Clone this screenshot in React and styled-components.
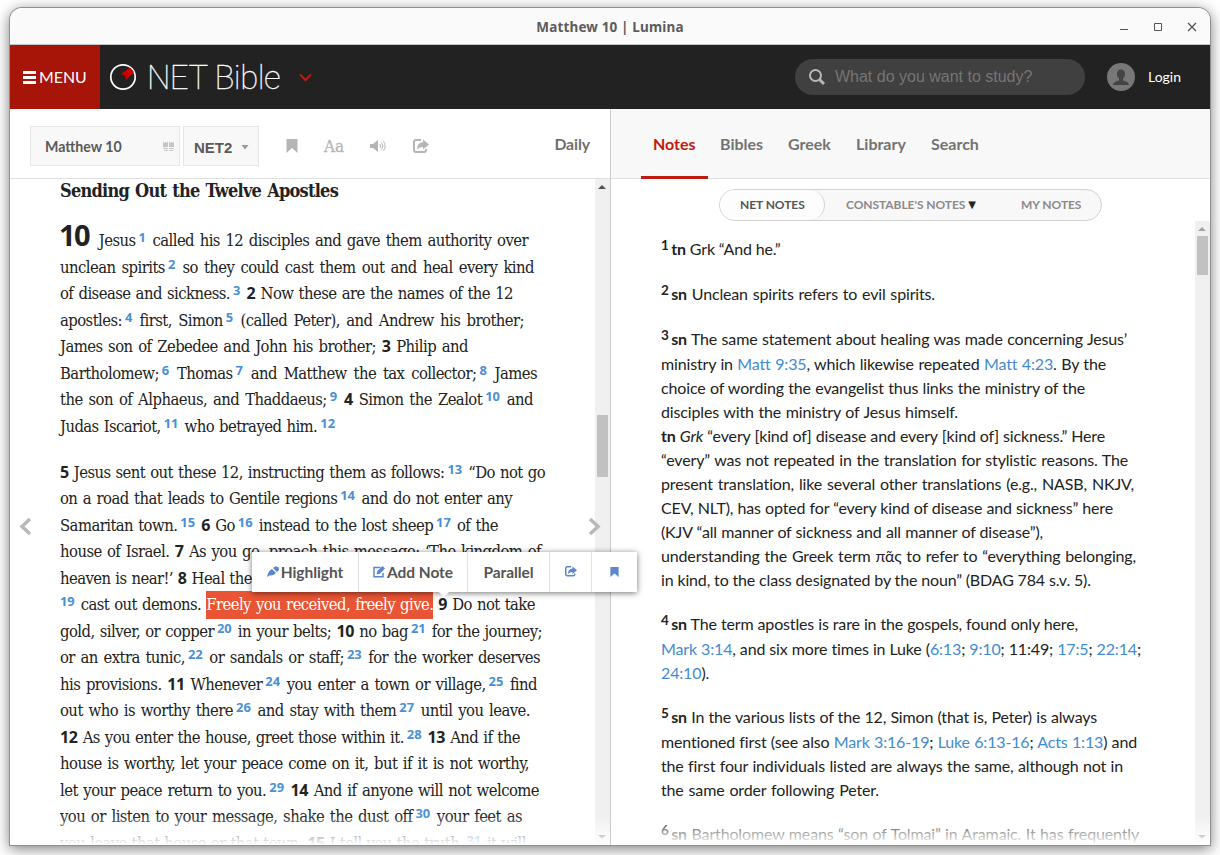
import React from "react";
import styled, { createGlobalStyle, css } from "styled-components";

const Global = createGlobalStyle`
  * { box-sizing: border-box; }
  body { margin: 0; background: #fff; overflow: hidden; }
  #root { width: 1220px; height: 855px; overflow: hidden; }
`;

const sans = `Lato, "Liberation Sans", sans-serif`;
const humanist = `"Open Sans", "Noto Sans", sans-serif`;
const slab = `"DejaVu Serif Condensed", "DejaVu Serif", serif`;

const Desktop = styled.div`
  width: 1220px;
  height: 855px;
  padding: 8px 10px 10px;
  overflow: hidden;
  font-family: ${sans};
  color: #222;
`;
const Window = styled.div`
  height: 837px;
  display: flex;
  flex-direction: column;
  background: #fff;
  border-radius: 12px 12px 0 0;
  box-shadow: 0 0 0 1px #8f8f8f, 0 3px 14px 1px rgba(0, 0, 0, 0.5);
`;
const TitleBar = styled.div`
  height: 37px;
  flex: none;
  display: grid;
  grid-template-columns: 1fr auto 1fr;
  align-items: center;
  background: #fafafa;
  border-bottom: 1px solid #c6c6c6;
  border-radius: 12px 12px 0 0;
`;
const Title = styled.div`
  grid-column: 2;
  font: 700 13.5px/38px "Noto Sans", sans-serif;
  letter-spacing: 0.15px;
  color: #5c5c5c;
`;
const WindowButtons = styled.div`
  display: flex;
  justify-content: flex-end;
  padding-right: 10px;
  gap: 18px;
  svg { display: block; }
`;
const Header = styled.div`
  height: 64px;
  flex: none;
  display: flex;
  align-items: center;
  background: #222;
  color: #fff;
`;
const MenuButton = styled.div`
  width: 90px;
  height: 64px;
  background: #a61508;
  display: flex;
  align-items: center;
  padding-left: 13px;
  gap: 3px;
  font: 15.9px/1 ${sans};
  span { padding-bottom: 1px; }
`;
const Brand = styled.div`
  display: flex;
  align-items: center;
  padding-left: 9px;
  flex: 1;
`;
const BrandName = styled.span`
  font: 100 33px/64px Roboto, sans-serif;
  letter-spacing: -0.5px;
  -webkit-text-stroke: 0.3px #fff;
  width: 134px;
  margin: 2px 18px 0 10px;
  white-space: nowrap;
`;
const SearchBox = styled.div`
  width: 290px;
  height: 36px;
  border-radius: 18px;
  background: #404040;
  display: flex;
  align-items: center;
  padding-left: 13px;
  gap: 9px;
  font: 16px/36px "Liberation Sans", sans-serif;
  color: #757575;
  white-space: nowrap;
`;
const Login = styled.div`
  display: flex;
  align-items: center;
  gap: 13px;
  padding: 0 29px 0 22px;
  font-size: 14px;
  span { padding-bottom: 2px; }
`;
const Panels = styled.div`
  flex: 1;
  min-height: 0;
  display: flex;
  position: relative;
`;
const Panel = styled.div`
  display: flex;
  flex-direction: column;
  min-height: 0;
  ${(p) => (p.$left ? css`width: 601px; border-right: 1px solid #ccc;` : css`flex: 1;`)}
`;
const Toolbar = styled.div`
  height: 70px;
  flex: none;
  display: flex;
  align-items: center;
  background: ${(p) => (p.$shaded ? "#f8f8f8" : "#fff")};
  border-bottom: 1px solid #dfdfdf;
  padding: ${(p) => (p.$shaded ? "0 0 0 30px" : "4px 20px 0 20px")};
`;
const Field = styled.div`
  width: ${(p) => p.$w}px;
  height: 40px;
  display: flex;
  align-items: center;
  justify-content: space-between;
  background: #f8f8f8;
  border: 1px solid #e6e6e6;
  margin-right: 3px;
  padding: ${(p) => (p.$version ? "3px 9px 0 10px" : "2px 5px 0 14px")};
  font: 700 ${(p) => (p.$version ? `15px "Liberation Sans"` : `14.2px ${sans}`)};
  color: #5a5a5a;
`;
const Tools = styled.div`
  display: flex;
  align-items: center;
  color: #b5b5b5;
  padding-left: 24px;
  flex: 1;
`;
const FontSize = styled.span`
  font: 17px/20px ${slab};
  -webkit-text-stroke: 0.3px #b5b5b5;
  width: 21px;
  margin: 0 25px 0 26px;
`;
const Speaker = styled.svg`
  margin-right: 27px;
`;
const Daily = styled.span`
  font: 700 15.8px/20px ${sans};
  letter-spacing: -0.1px;
  color: #6f6f6f;
  padding-bottom: 3px;
`;
const Tab = styled.div`
  height: 70px;
  margin-right: ${(p) => p.$gap}px;
  padding: ${(p) => (p.$active ? "0 12px" : "0")};
  font: 700 16px/69px ${sans};
  color: ${(p) => (p.$active ? "#bf1a0e" : "#737373")};
  border-bottom: 3px solid ${(p) => (p.$active ? "#bf1a0e" : "transparent")};
  width: ${(p) => p.$w}px;
  white-space: nowrap;
  position: relative;
  top: 0.5px;
`;
const Scroller = styled.div`
  flex: 1;
  min-height: 0;
  display: flex;
  overflow: hidden;
  position: relative;
`;
const Content = styled.div`
  flex: 1;
  min-width: 0;
  overflow: hidden;
  padding: ${(p) => p.$pad};
`;
const Fade = styled.div`
  position: absolute;
  left: 0;
  right: 0;
  bottom: 0;
  height: 30px;
  background: linear-gradient(rgba(255, 255, 255, 0), #fff);
`;
const Track = styled.div`
  width: 15px;
  flex: none;
  background: #f0f0f0;
  display: flex;
  flex-direction: column;
  align-items: center;
  justify-content: space-between;
  padding: 6px 0;
`;
const Thumb = styled.div`
  width: 11px;
  height: ${(p) => p.$h}px;
  background: #c1c1c1;
  margin: ${(p) => p.$top}px 0 auto;
`;
const Arrow = styled.i`
  border: 4px solid transparent;
  border-top-width: ${(p) => (p.$down ? 4 : 0)}px;
  border-bottom-width: ${(p) => (p.$down ? 0 : 4)}px;
  ${(p) => (p.$down ? "border-top-color" : "border-bottom-color")}: ${(p) => p.$c};
  margin-right: 1px;
`;
const Heading = styled.h2`
  margin: -1px 0 24px;
  width: 278px;
  font: 700 18px/26px ${slab};
  letter-spacing: -0.75px;
  text-align-last: justify;
  white-space: nowrap;
`;
const Verse = styled.div`
  height: 26.5px;
  width: ${(p) => p.$w}px;
  font: 16.5px/26.5px ${slab};
  letter-spacing: -0.56px;
  text-align-last: justify;
  white-space: nowrap;
  margin-bottom: ${(p) => (p.$end ? 19.8 : 0)}px;
`;
const VerseNumber = styled.b`
  font: 700 16px/0 ${humanist};
  letter-spacing: -0.3px;
`;
const Chapter = styled.b`
  font: 700 29px/0 ${humanist};
  letter-spacing: -1.5px;
  margin: 0 4px 0 -1px;
`;
const FootMark = styled.sup`
  font: 700 12.9px/0 ${humanist};
  letter-spacing: 0;
  color: #4a90d5;
  vertical-align: 4px;
  padding: 0 1px 0 ${(p) => (p.children === "19" ? 0 : 3)}px;
`;
const Selected = styled.mark`
  background: #e95434;
  color: #fff;
  padding: 4px 0 5px;
`;
const NoteLine = styled.div`
  font: 16px/24px ${sans};
  letter-spacing: -0.15px;
  height: ${(p) => (p.$sup ? 25 : 24)}px;
  width: ${(p) => p.$w}px;
  text-align-last: justify;
  white-space: nowrap;
  margin-bottom: ${(p) => (p.$end ? 20 : 0)}px;
`;
const NoteMark = styled.sup`
  font-size: 13.5px;
  font-weight: 700;
  line-height: 0;
  vertical-align: 5px;
  padding-right: 2.5px;
`;
const Link = styled.a`
  color: #428bd1;
`;
const PillRow = styled.div`
  height: 42px;
  flex: none;
  padding: 10px 0 0 108px;
`;
const Pills = styled.div`
  width: 383px;
  height: 32px;
  border: 1px solid #d2d2d2;
  border-radius: 16px;
  background: #f8f8f8;
  display: flex;
  font: 700 12px/30px ${sans};
  letter-spacing: -0.06px;
  color: #8a8a8a;
  white-space: nowrap;
`;
const Pill = styled.div`
  width: ${(p) => p.$w}px;
  padding-left: ${(p) => p.$pad}px;
  ${(p) =>
    p.$active &&
    css`
      background: #fdfdfd;
      color: #555;
      border-right: 1px solid #d2d2d2;
      border-radius: 15px;
    `}
  span { color: #222; font: 10px/1 "DejaVu Sans"; vertical-align: 1.5px; }
`;
const PageArrow = styled.div`
  position: absolute;
  top: 408px;
  left: ${(p) => p.$x}px;
`;
const Popup = styled.div`
  position: absolute;
  left: 242px;
  top: 443px;
  width: 385px;
  height: 40px;
  display: flex;
  background: #fff;
  box-shadow: 0 1px 6px rgba(0, 0, 0, 0.55);
  font: 700 15.5px/38px ${sans};
  letter-spacing: -0.05px;
  color: #555;
  white-space: nowrap;
  &::after {
    content: "";
    position: absolute;
    left: 187px;
    top: 40px;
    border: 5px solid transparent;
    border-top-color: #fff;
    border-bottom: 0;
  }
`;
const Action = styled.div`
  width: ${(p) => p.$w}px;
  display: flex;
  align-items: center;
  justify-content: center;
  gap: 2px;
  border-right: ${(p) => (p.$last ? 0 : 1)}px solid #e2e2e2;
  svg { margin-bottom: 1px; }
`;

const Bookmark = ({ w = 12, h = 14, c = "#b5b5b5" }) => (
  <svg width={w} height={h} viewBox="0 0 12 14" fill={c} preserveAspectRatio="none"><path d="M.5 0h11v14L6 9 .5 14z" /></svg>
);
const Share = ({ s = 16, c = "#b5b5b5" }) => (
  <svg width={s} height={s * 14 / 16} viewBox="0 0 16 14" fill="none">
    <path d="M8 1H3Q1 1 1 3v8q0 2 2 2h8q2 0 2-2v-1" stroke={c} strokeWidth="2" />
    <path d="M10 .5 16 5.500l-6 5V8Q6.500 7.800 4 10.500 4 3.500 10 3.300z" fill={c} />
  </svg>
);

const token = /(\[\d+\]|\*[^*]+\*|#\d+#|\{[^}]+\}|<[^>]+>|_[^_]+_)/;
const render = (text, Mark) =>
  text.split(token).map((part, i) => {
    const inner = part.slice(1, -1);
    switch (part[0]) {
      case "[": return /^\[\d+\]$/.test(part) ? <Mark key={i}>{inner}</Mark> : part;
      case "*": return Mark === FootMark ? <VerseNumber key={i}>{inner}</VerseNumber> : <b key={i}>{inner}</b>;
      case "#": return <Chapter key={i}>{inner}</Chapter>;
      case "{": return <Selected key={i}>{inner}</Selected>;
      case "<": return <Link key={i}>{inner}</Link>;
      case "_": return <i key={i}>{inner}</i>;
      default: return part;
    }
  });

const verses = [
  ["#10# Jesus[1] called his 12 disciples and gave them authority over", 468],
  ["unclean spirits[2] so they could cast them out and heal every kind", 474],
  ["of disease and sickness.[3] *2* Now these are the names of the 12", 453],
  ["apostles:[4] first, Simon[5] (called Peter), and Andrew his brother;", 464],
  ["James son of Zebedee and John his brother; *3* Philip and", 408],
  ["Bartholomew;[6] Thomas[7] and Matthew the tax collector;[8] James", 477],
  ["the son of Alphaeus, and Thaddaeus;[9] *4* Simon the Zealot[10] and", 473],
  ["Judas Iscariot,[11] who betrayed him.[12]", 276, true],
  ["*5* Jesus sent out these 12, instructing them as follows:[13] “Do not go", 485],
  ["on a road that leads to Gentile regions[14] and do not enter any", 452],
  ["Samaritan town.[15] *6* Go[16] instead to the lost sheep[17] of the", 438],
  ["house of Israel. *7* As you go, preach this message: ‘The kingdom of", 481],
  ["heaven is near!’ *8* Heal the", 192],
  ["[19] cast out demons. {Freely you received, freely give.} *9* Do not take", 475],
  ["gold, silver, or copper[20] in your belts; *10* no bag[21] for the journey;", 482],
  ["or an extra tunic,[22] or sandals or staff;[23] for the worker deserves", 480],
  ["his provisions. *11* Whenever[24] you enter a town or village,[25] find", 477],
  ["out who is worthy there[26] and stay with them[27] until you leave.", 470],
  ["*12* As you enter the house, greet those within it.[28] *13* And if the", 460],
  ["house is worthy, let your peace come on it, but if it is not worthy,", 469],
  ["let your peace return to you.[29] *14* And if anyone will not welcome", 479],
  ["you or listen to your message, shake the dust off[30] your feet as", 462],
  ["you leave that house or that town. *15* I tell you the truth,[31] it will", 466],
];
const notes = [
  ["[1]*tn* Grk “And he.”", 118, true],
  ["[2]*sn* Unclean spirits refers to evil spirits.", 274, true],
  ["[3]*sn* The same statement about healing was made concerning Jesus’", 466],
  ["ministry in <Matt 9:35>, which likewise repeated <Matt 4:23>. By the", 445],
  ["choice of wording the evangelist thus links the ministry of the", 424],
  ["disciples with the ministry of Jesus himself.", 297],
  ["*tn* _Grk_ “every [kind of] disease and every [kind of] sickness.” Here", 444],
  ["“every” was not repeated in the translation for stylistic reasons. The", 467],
  ["present translation, like several other translations (e.g., NASB, NKJV,", 473],
  ["CEV, NLT), has opted for “every kind of disease and sickness” here", 452],
  ["(KJV “all manner of sickness and all manner of disease”),", 382],
  ["understanding the Greek term πᾶς to refer to “everything belonging,", 475],
  ["in kind, to the class designated by the noun” (BDAG 784 s.v. 5).", 427, true],
  ["[4]*sn* The term apostles is rare in the gospels, found only here,", 417],
  ["<Mark 3:14>, and six more times in Luke (<6:13>; <9:10>; 11:49; <17:5>; <22:14>;", 480],
  ["<24:10>).", 50, true],
  ["[5]*sn* In the various lists of the 12, Simon (that is, Peter) is always", 436],
  ["mentioned first (see also <Mark 3:16-19>; <Luke 6:13-16>; <Acts 1:13>) and", 476],
  ["the first four individuals listed are always the same, although not in", 462],
  ["the same order following Peter.", 218, true],
  ["[6]*sn* Bartholomew means “son of Tolmai” in Aramaic. It has frequently", 478],
];

export default function App() {
  return (
    <Desktop>
      <Global />
      <Window>
        <TitleBar>
          <Title>Matthew 10 | Lumina</Title>
          <WindowButtons>
            <svg width="16" height="16" stroke="#555"><path d="M4 10.500h8" /></svg>
            <svg width="16" height="16" stroke="#555" fill="none"><path d="M4.500 4.500h7v7h-7z" /></svg>
            <svg width="16" height="16" stroke="#555" strokeWidth="1.300"><path d="m4 4 8 8m0-8-8 8" /></svg>
          </WindowButtons>
        </TitleBar>
        <Header>
          <MenuButton>
            <svg width="13" height="13" fill="#fff"><path d="M0 0h13v3H0zM0 5h13v3H0zM0 10h13v3H0z" /></svg>
            <span>MENU</span>
          </MenuButton>
          <Brand>
            <svg width="28" height="28" viewBox="0 0 28 28">
              <circle cx="14" cy="14" r="12.200" fill="none" stroke="#fff" strokeWidth="1.700" />
              <path d="M21 4.500 25 9l-8 8-.8-4.700-4.700-.8z" fill="#d00000" />
            </svg>
            <BrandName>NET Bible</BrandName>
            <svg width="13" height="9" fill="none" stroke="#bf1a0e" strokeWidth="2"><path d="m1 1.500 5.500 5.500L12 1.500" /></svg>
          </Brand>
          <SearchBox>
            <svg width="18" height="18" fill="none" stroke="#b8b8b8"><circle cx="7.500" cy="7.500" r="5.500" strokeWidth="2" /><path d="m11.500 11.500 4.500 4.500" strokeWidth="3" /></svg>
            What do you want to study?
          </SearchBox>
          <Login>
            <svg width="28" height="28" viewBox="0 0 28 28">
              <circle cx="14" cy="14" r="14" fill="#777" />
              <path d="M14 6.500c3 0 4.300 2 4 5-.2 2-1 3.500-2 4.300v1.700c3 .8 5.500 1.500 6 4.500H6c.5-3 3-3.700 6-4.500v-1.700c-1-.8-1.800-2.300-2-4.300-.3-3 1-5 4-5z" fill="#444" />
            </svg>
            <span>Login</span>
          </Login>
        </Header>
        <Panels>
          <Panel $left>
            <Toolbar>
              <Field $w={150}>
                Matthew 10
                <svg width="11" height="11" fill="#c4c4c4"><path d="M0 0l1 2 1.500-1L4 2l1-2v6H0zM6 0l1 2 1.500-1L10 2l1-2v6H6zM0 7h5v1H0zM6 7h5v1H6zM1 9h4v1H1zM6 9h4v1H6z" /></svg>
              </Field>
              <Field $w={76} $version>
                NET2
                <svg width="8" height="5" fill="#999"><path d="M.5 0h7L4 4.500z" /></svg>
              </Field>
              <Tools>
                <Bookmark w={12} h={14} />
                <FontSize>Aa</FontSize>
                <Speaker width="16" height="12" fill="none" stroke="#b5b5b5"><path d="M0 4h3l5-4v12L3 8H0z" fill="#b5b5b5" stroke="none" /><path d="M10 4q1.500 2 0 4M11.500 2.500q3 3.500 0 7M13.500 1.200q3.200 4.800 0 9.600" /></Speaker>
                <Share />
              </Tools>
              <Daily>Daily</Daily>
            </Toolbar>
            <Scroller>
              <Content $pad="0 0 0 50px">
                <Heading>Sending Out the Twelve Apostles</Heading>
                {verses.map(([t, w, end]) => <Verse key={t} $w={w} $end={end}>{render(t, FootMark)}</Verse>)}
              </Content>
              <Track>
                <Arrow $c="#505050" />
                <Thumb $h={62} $top={226} />
                <Arrow $down $c="#666" />
              </Track>
              <Fade />
            </Scroller>
          </Panel>
          <Panel>
            <Toolbar $shaded>
              <Tab $active $w={67} $gap={12}>Notes</Tab>
              <Tab $w={44} $gap={24}>Bibles</Tab>
              <Tab $w={44} $gap={24}>Greek</Tab>
              <Tab $w={51} $gap={24}>Library</Tab>
              <Tab $w={50} $gap={0}>Search</Tab>
            </Toolbar>
            <PillRow>
              <Pills>
                <Pill $active $w={105} $pad={20}>NET NOTES</Pill>
                <Pill $w={176} $pad={21}>CONSTABLE'S NOTES <span>▼</span></Pill>
                <Pill $w={100} $pad={20}>MY NOTES</Pill>
              </Pills>
            </PillRow>
            <Scroller>
              <Content $pad="16px 0 0 50px">
                {notes.map(([t, w, end]) => <NoteLine key={t} $w={w} $end={end} $sup={/^\[\d/.test(t)}>{render(t, NoteMark)}</NoteLine>)}
              </Content>
              <Track>
                <Arrow $c="#a3a3a3" />
                <Thumb $h={39} $top={5} />
                <Arrow $down $c="#666" />
              </Track>
              <Fade />
            </Scroller>
          </Panel>
          <PageArrow $x={9}><svg width="13" height="19" fill="none" stroke="#b8b8b8" strokeWidth="3.500"><path d="m11 2-8 7.500 8 7.500" /></svg></PageArrow>
          <PageArrow $x={578}><svg width="13" height="19" fill="none" stroke="#b8b8b8" strokeWidth="3.500"><path d="m2 2 8 7.500L2 17" /></svg></PageArrow>
          <Popup>
            <Action $w={107}>
              <svg width="12" height="11" fill="#5b88cc"><path d="M0 11Q1 5 5 3l4 4Q6 10 2.500 9.500zM6 2l3-2 1 1 2 .5-.3 3L9.800 6z" /></svg>
              Highlight
            </Action>
            <Action $w={109}>
              <svg width="12" height="12" fill="none" stroke="#5b88cc" strokeWidth="1.500"><path d="M7.500 1.500H1v9.300h9V7" /><path d="m4.500 7.500.5-2L9.500 1l1.500 1.500L6.500 7z" fill="#5b88cc" /></svg>
              Add Note
            </Action>
            <Action $w={82}>Parallel</Action>
            <Action $w={42}><Share s={12} c="#5b88cc" /></Action>
            <Action $w={45} $last><Bookmark w={9} h={10} c="#5b88cc" /></Action>
          </Popup>
        </Panels>
      </Window>
    </Desktop>
  );
}
